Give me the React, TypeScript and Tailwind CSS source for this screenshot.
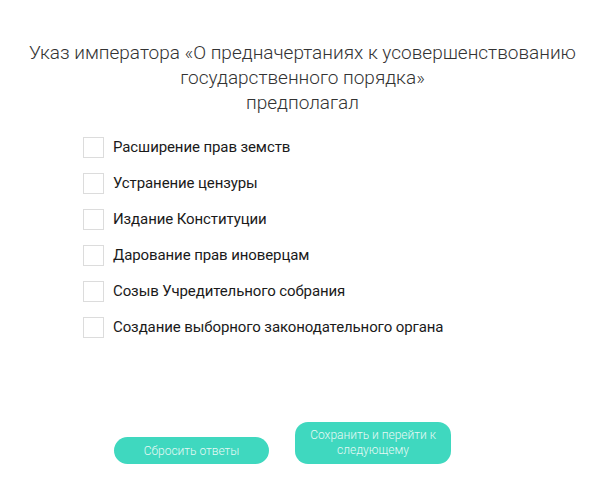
import React from "react";

const options = [
  "Расширение прав земств",
  "Устранение цензуры",
  "Издание Конституции",
  "Дарование прав иноверцам",
  "Созыв Учредительного собрания",
  "Создание выборного законодательного органа",
];

export default function App() {
  return (
    <div
      className="w-[605px] h-[480px] bg-white flex flex-col items-center"
      style={{ fontFamily: "Roboto, 'Noto Sans', sans-serif" }}
    >
      <h1 className="mt-[40px] text-[19px] leading-[25px] font-light text-[#333333] text-center">
        Указ императора «О предначертаниях к усовершенствованию
        <br />
        государственного порядка»
        <br />
        предполагал
      </h1>
      <div className="self-start ml-[83px] mt-[22px] flex flex-col gap-[16px]">
        {options.map((o) => (
          <label key={o} className="flex items-center gap-[9px] h-[20px]">
            <span className="w-[21px] h-[21px] border border-[#dcdcdc] bg-white shrink-0" />
            <span className="text-[15px] tracking-[-0.1px] text-[#1a1a1a]">{o}</span>
          </label>
        ))}
      </div>
      <div className="self-start ml-[114px] mt-auto mb-[16px] flex items-end gap-[26px]">
        <button className="w-[155px] h-[27px] rounded-full bg-[#3fd8bf] text-[12px] font-light text-[#e6f8f5]">
          Сбросить ответы
        </button>
        <button className="w-[156px] h-[42px] rounded-[13px] bg-[#3fd8bf] text-[12px] leading-[15px] font-light text-[#e6f8f5] px-3">
          Сохранить и перейти к следующему
        </button>
      </div>
    </div>
  );
}
